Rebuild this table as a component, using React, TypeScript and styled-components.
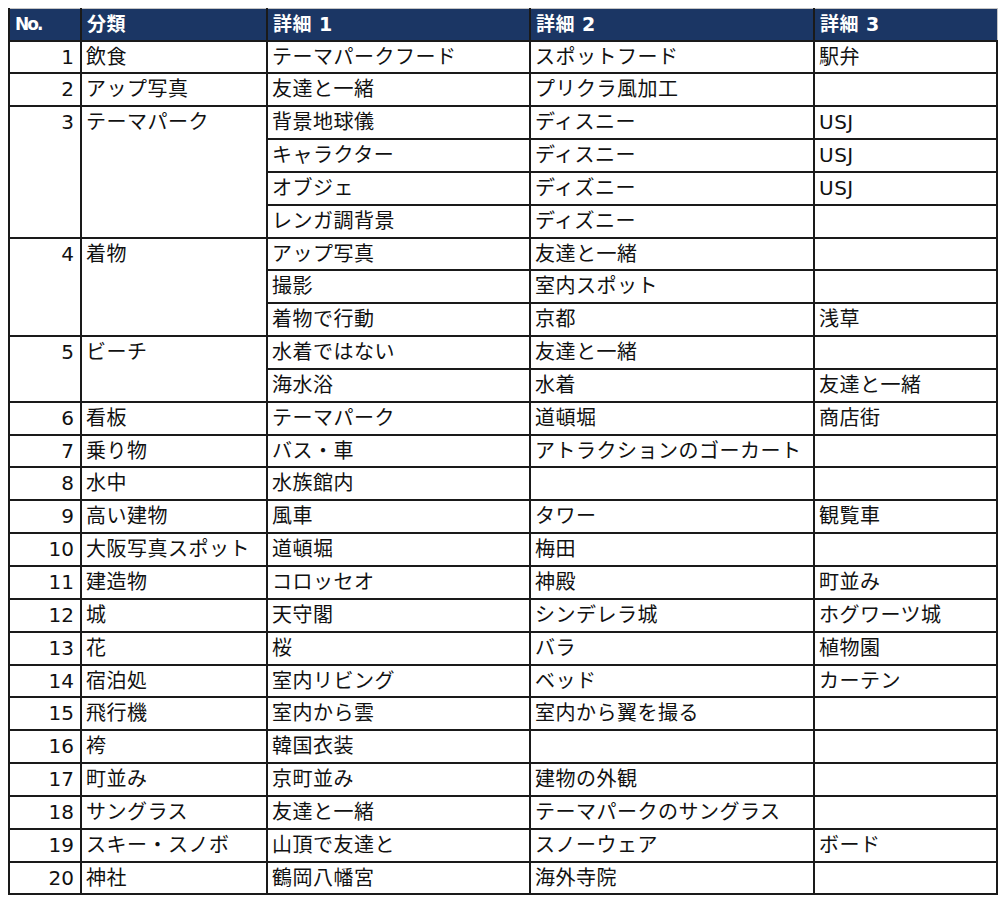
import React from "react";
import styled, { createGlobalStyle } from "styled-components";

const GlobalStyle = createGlobalStyle`
  html, body { margin: 0; padding: 0; background: #ffffff; }
  body { padding: 8px; }
`;

type Group = { no: number; cat: string; rows: [string, string, string][] };

const data: Group[] = [
  { no: 1, cat: "飲食", rows: [["テーマパークフード", "スポットフード", "駅弁"]] },
  { no: 2, cat: "アップ写真", rows: [["友達と一緒", "プリクラ風加工", ""]] },
  {
    no: 3,
    cat: "テーマパーク",
    rows: [
      ["背景地球儀", "ディスニー", "USJ"],
      ["キャラクター", "ディスニー", "USJ"],
      ["オブジェ", "ディズニー", "USJ"],
      ["レンガ調背景", "ディズニー", ""],
    ],
  },
  {
    no: 4,
    cat: "着物",
    rows: [
      ["アップ写真", "友達と一緒", ""],
      ["撮影", "室内スポット", ""],
      ["着物で行動", "京都", "浅草"],
    ],
  },
  {
    no: 5,
    cat: "ビーチ",
    rows: [
      ["水着ではない", "友達と一緒", ""],
      ["海水浴", "水着", "友達と一緒"],
    ],
  },
  { no: 6, cat: "看板", rows: [["テーマパーク", "道頓堀", "商店街"]] },
  { no: 7, cat: "乗り物", rows: [["バス・車", "アトラクションのゴーカート", ""]] },
  { no: 8, cat: "水中", rows: [["水族館内", "", ""]] },
  { no: 9, cat: "高い建物", rows: [["風車", "タワー", "観覧車"]] },
  { no: 10, cat: "大阪写真スポット", rows: [["道頓堀", "梅田", ""]] },
  { no: 11, cat: "建造物", rows: [["コロッセオ", "神殿", "町並み"]] },
  { no: 12, cat: "城", rows: [["天守閣", "シンデレラ城", "ホグワーツ城"]] },
  { no: 13, cat: "花", rows: [["桜", "バラ", "植物園"]] },
  { no: 14, cat: "宿泊処", rows: [["室内リビング", "ベッド", "カーテン"]] },
  { no: 15, cat: "飛行機", rows: [["室内から雲", "室内から翼を撮る", ""]] },
  { no: 16, cat: "袴", rows: [["韓国衣装", "", ""]] },
  { no: 17, cat: "町並み", rows: [["京町並み", "建物の外観", ""]] },
  { no: 18, cat: "サングラス", rows: [["友達と一緒", "テーマパークのサングラス", ""]] },
  { no: 19, cat: "スキー・スノボ", rows: [["山頂で友達と", "スノーウェア", "ボード"]] },
  { no: 20, cat: "神社", rows: [["鶴岡八幡宮", "海外寺院", ""]] },
];

const Table = styled.table`
  border-collapse: collapse;
  table-layout: fixed;
  width: 988px;
  font-family: "DejaVu Sans", "Noto Sans CJK JP", sans-serif;
  font-size: 20px;
  color: #111111;
`;

const Col = styled.col<{ $w: number }>`
  width: ${(p) => p.$w}px;
`;

const HeadRow = styled.tr`
  height: 32px;
`;

const HeadCell = styled.th<{ $narrow?: boolean }>`
  background: #1b3664;
  color: #ffffff;
  font-weight: bold;
  text-align: left;
  vertical-align: top;
  padding: 1px 5px 0;
  line-height: 28px;
  border: 2px solid #1a1a1a;
  border-top: 1px solid #c4c4c4;
  letter-spacing: ${(p) => (p.$narrow ? "-2px" : "0.5px")};
  font-size: ${(p) => (p.$narrow ? "17px" : "19px")};
  white-space: nowrap;
  overflow: hidden;
  &:last-child {
    border-right: 1px solid #c4c4c4;
  }
`;

const Row = styled.tr`
  height: 32.85px;
`;

const Cell = styled.td<{ $num?: boolean }>`
  border: 2px solid #1a1a1a;
  padding: 1px ${(p) => (p.$num ? "6px" : "4px")} 0 4px;
  line-height: 28px;
  vertical-align: top;
  text-align: ${(p) => (p.$num ? "right" : "left")};
  letter-spacing: ${(p) => (p.$num ? "0" : "0.5px")};
  white-space: nowrap;
  overflow: hidden;
`;

export default function App() {
  return (
    <>
      <GlobalStyle />
      <Table>
        <colgroup>
          <Col $w={72} />
          <Col $w={186} />
          <Col $w={263} />
          <Col $w={284} />
          <Col $w={183} />
        </colgroup>
        <thead>
          <HeadRow>
            <HeadCell $narrow>No.</HeadCell>
            <HeadCell>分類</HeadCell>
            <HeadCell>詳細 1</HeadCell>
            <HeadCell>詳細 2</HeadCell>
            <HeadCell>詳細 3</HeadCell>
          </HeadRow>
        </thead>
        <tbody>
          {data.map((g) =>
            g.rows.map((r, i) => (
              <Row key={`${g.no}-${i}`}>
                {i === 0 && (
                  <>
                    <Cell $num rowSpan={g.rows.length}>
                      {g.no}
                    </Cell>
                    <Cell rowSpan={g.rows.length}>{g.cat}</Cell>
                  </>
                )}
                <Cell>{r[0]}</Cell>
                <Cell>{r[1]}</Cell>
                <Cell>{r[2]}</Cell>
              </Row>
            ))
          )}
        </tbody>
      </Table>
    </>
  );
}
